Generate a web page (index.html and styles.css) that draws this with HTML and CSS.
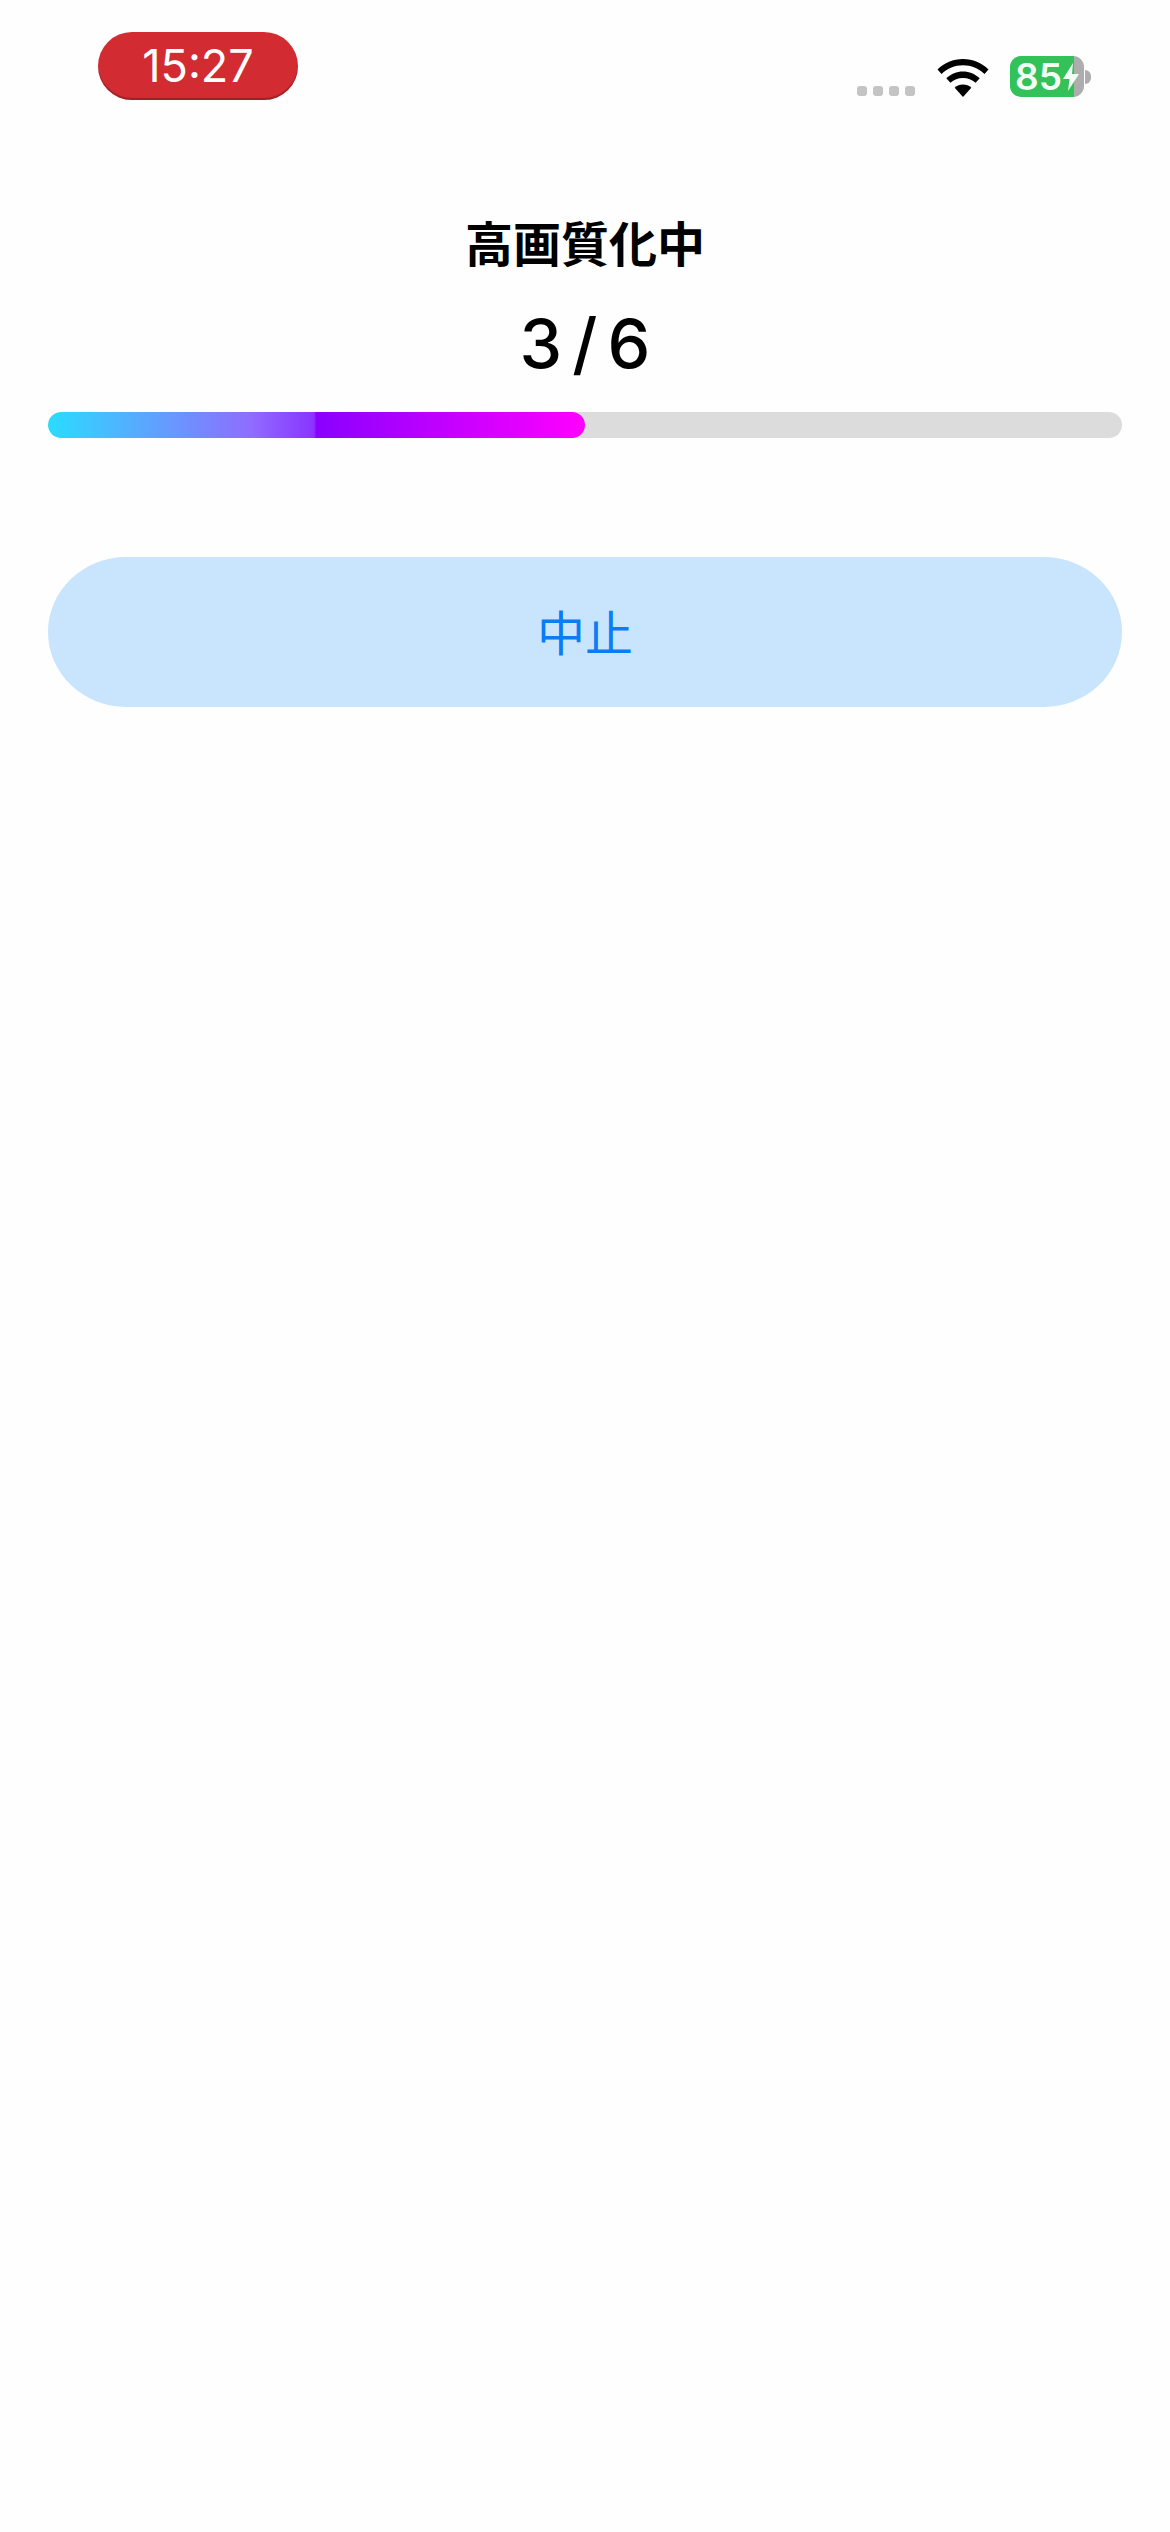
FILE: index.html
```html
<!DOCTYPE html>
<html lang="ja">
<head>
    <meta charset="UTF-8">
    <meta name="viewport" content="width=device-width, initial-scale=1.0">
    <title>高画質化中</title>
    <link rel="stylesheet" href="styles.css">
</head>
<body>
<header class="status-bar">
    <div class="time-pill">15:27</div>
    <div class="status-icons">
        <div class="signal-dots">
            <span></span><span></span><span></span><span></span>
        </div>
        <svg class="wifi" viewBox="0 0 52 38" aria-hidden="true">
            <path d="M26 0C16 0 7.500 3.800 0.500 10.500L4.500 15C10.500 9.500 17.800 6.300 26 6.300C34.200 6.300 41.500 9.500 47.500 15L51.500 10.500C44.500 3.800 36 0 26 0Z"/>
            <path d="M26 12.500C19.600 12.500 14 15 9.300 19.300L13.400 23.800C16.900 20.700 21.100 18.900 26 18.900C30.900 18.900 35.100 20.700 38.600 23.800L42.700 19.300C38 15 32.400 12.500 26 12.500Z"/>
            <path d="M26 25.500C22.700 25.500 20 26.600 17.700 28.700L26 38L34.300 28.700C32 26.600 29.300 25.500 26 25.500Z"/>
        </svg>
        <div class="battery">
            <div class="battery-body">
                <span class="battery-level">85</span>
                <svg class="bolt" viewBox="0 0 16 28" aria-hidden="true">
                    <path d="M10 0L0 16H6.500L5 28L16 11H9Z"/>
                </svg>
            </div>
            <div class="battery-nub"></div>
        </div>
    </div>
</header>
<main class="content">
    <h1 class="progress-title">高画質化中</h1>
    <p class="progress-count">3 / 6</p>
    <div class="progress-track">
        <div class="progress-fill" style="width: 50%"></div>
    </div>
    <button class="cancel-button">中止</button>
</main>
</body>
</html>
```

FILE: styles.css
```css
body {
    margin: 0;
    height: 2532px;
    background: #fefefe;
    color: #000;
    font-family: "Inter", "Noto Sans CJK JP", sans-serif;
}

.status-bar {
    display: flex;
    justify-content: space-between;
    height: 207px;
    padding: 32px 79px 0 98px;
    box-sizing: border-box;
}

.time-pill {
    width: 200px;
    height: 68px;
    border-radius: 34px;
    background: #d22c32;
    box-shadow: inset 0 -2px 1px rgba(90, 20, 25, 0.45);
    color: #fff;
    font-size: 45px;
    line-height: 68px;
    text-align: center;
}

.status-icons {
    display: flex;
    align-items: flex-start;
}

.signal-dots {
    display: flex;
    gap: 6px;
    margin-top: 54px;
    margin-right: 22px;
}

.signal-dots span {
    width: 10px;
    height: 10px;
    border-radius: 3px;
    background: #c4c4c4;
}

.wifi {
    width: 52px;
    height: 38px;
    margin-top: 27px;
    margin-right: 21px;
}

.battery {
    display: flex;
    align-items: center;
    margin-top: 24px;
}

.battery-body {
    display: flex;
    align-items: center;
    width: 74px;
    height: 41px;
    padding-left: 5px;
    box-sizing: border-box;
    border-radius: 11px;
    background: linear-gradient(to right, #33c15a 87%, #adadad 87%);
    color: #f2fff5;
}

.battery-level {
    font-size: 37px;
    font-weight: 600;
    line-height: 41px;
}

.bolt {
    flex: none;
    width: 16px;
    height: 30px;
    margin-left: 1px;
    fill: #f2fff5;
}

.battery-nub {
    width: 6px;
    height: 14px;
    border-radius: 0 7px 7px 0;
    background: #adadad;
    margin-left: 1px;
}

.content {
    padding: 0 48px;
}

.progress-title {
    margin: 0;
    font-family: "Noto Sans CJK JP", sans-serif;
    font-size: 48px;
    font-weight: 700;
    line-height: 68px;
    text-align: center;
}

.progress-count {
    margin: 29px 0 0;
    font-size: 68px;
    font-weight: 500;
    line-height: 78px;
    text-align: center;
    word-spacing: -8px;
}

.progress-track {
    height: 26px;
    margin-top: 30px;
    border-radius: 13px;
    background: #dcdcdc;
    overflow: hidden;
}

.progress-fill {
    height: 100%;
    border-radius: 13px;
    background: linear-gradient(to right, #2adcff 0%, #8f6cff 38%, #8a34ff 49.500%, #8a00ff 50%, #ff00ff 100%);
}

.cancel-button {
    display: block;
    width: 100%;
    height: 150px;
    margin-top: 119px;
    padding: 0 0 5px;
    border: 0;
    border-radius: 78px / 75px;
    background: #c9e5fe;
    color: #0a7cf5;
    font-family: "Noto Sans CJK JP", sans-serif;
    font-size: 48px;
}
```
